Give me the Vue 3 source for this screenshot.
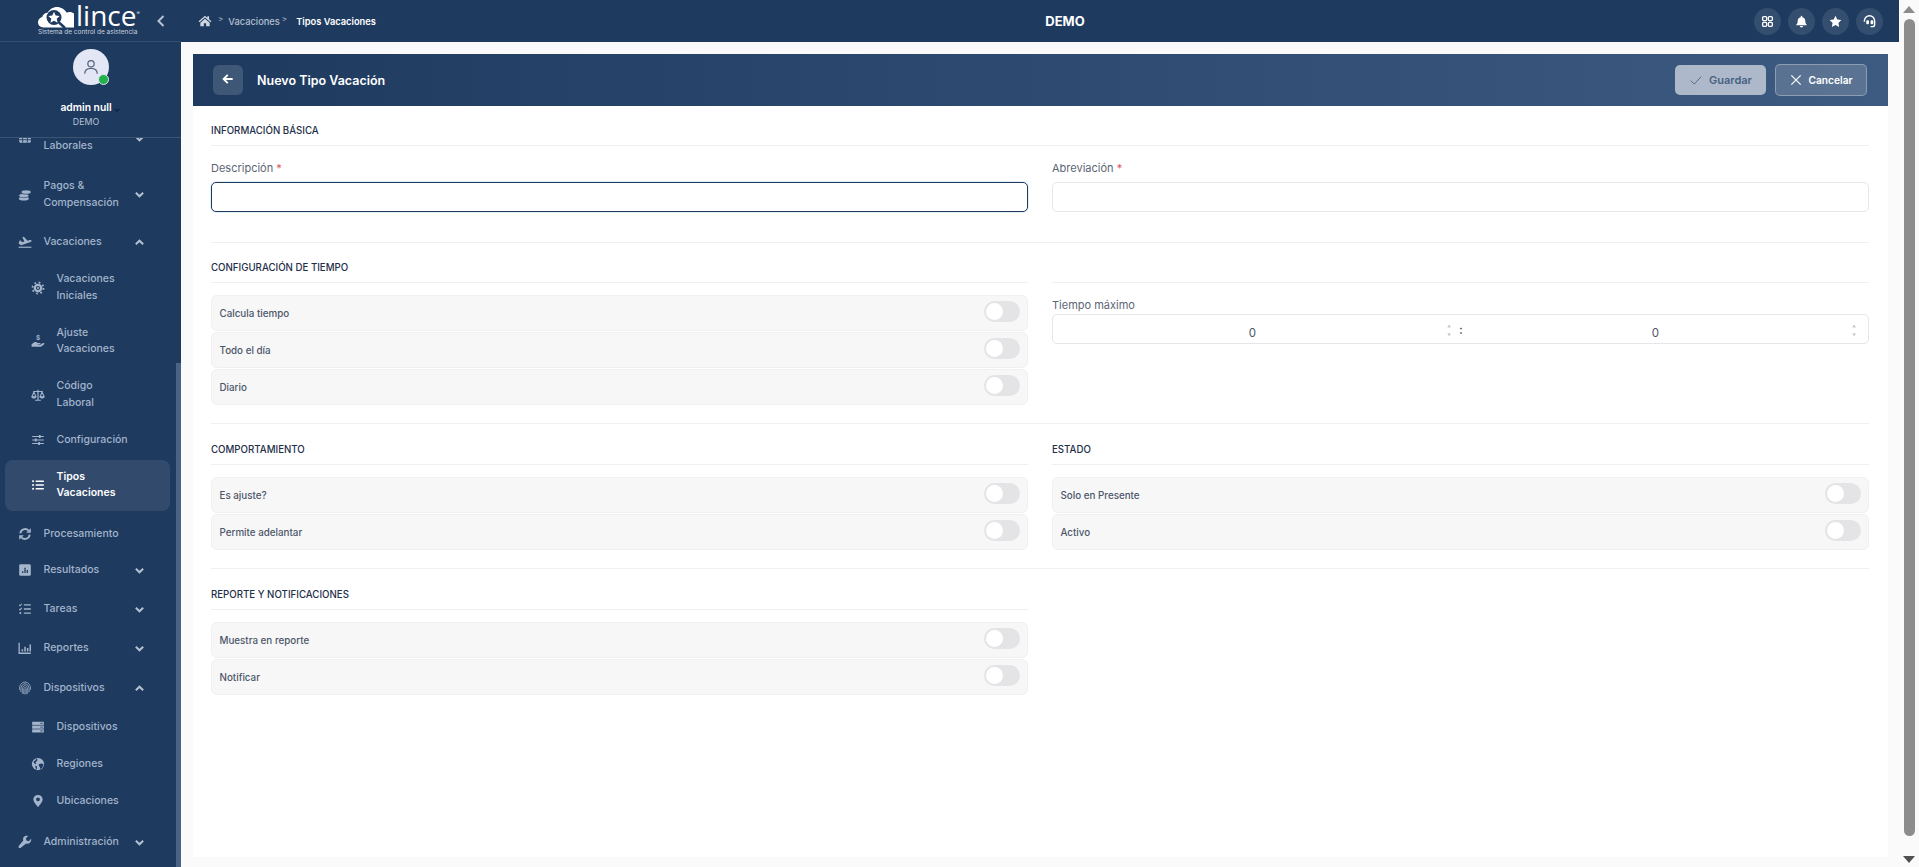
<template>
  <div class="page">
    <div class="app">
      <aside class="sidebar">
        <div class="logo-row">
          <div class="logo">
            <div class="logo-top">
              <svg class="logo-cloud" viewBox="0 0 36 21">
                <path d="M5.500 20.500C2.400 20.500 0 18.200 0 15.300c0-2.500 1.700-4.600 4.200-5.200C4.900 7.500 7 5.800 9.500 5.800 11.500 2.300 15 0 19 0c4 0 7.500 2.300 9.500 5.500 1-.4 2-.6 3-.6 2 0 3.500.6 4.500 1.700v13.900H5.500z" fill="#fff"/>
                <circle cx="16" cy="10.500" r="7.500" fill="#1e3a5f"/>
                <path d="M21 15.500 27 21" stroke="#1e3a5f" stroke-width="2.500"/>
                <polygon points="16,4.800 17.700,8.600 21.700,9 18.700,11.800 19.600,15.800 16,13.700 12.400,15.800 13.300,11.800 10.300,9 14.300,8.600" fill="#fff"/>
              </svg>
              <span class="logo-name">lince</span><span class="logo-reg">®</span>
            </div>
            <div class="logo-sub">Sistema de control de asistencia</div>
          </div>
          <svg class="collapse" viewBox="0 0 10 14"><polyline points="7.500,2 2.500,7 7.500,12" /></svg>
        </div>

        <div class="profile">
          <div class="avatar">
            <svg viewBox="0 0 24 24"><circle cx="12" cy="8" r="3.800"/><path d="M4.500 20c0-4 3-6.500 7.500-6.500s7.500 2.500 7.500 6.500"/></svg>
            <span class="online"></span>
          </div>
          <div class="user-name">admin null<svg class="user-caret" viewBox="0 0 10 6"><polyline points="2,1.500 5,4.500 8,1.500"/></svg></div>
          <div class="user-company">DEMO</div>
        </div>

        <nav class="nav">
          <div class="nav-list">
            <div
              v-for="item in menu"
              :key="item.id"
              class="nav-item"
              :class="[item.space, { sub: item.sub, active: item.active }]"
            >
              <svg class="nav-icon" viewBox="0 0 24 24" v-html="icons[item.icon]"></svg>
              <span class="nav-text">{{ item.label }}</span>
              <svg v-if="item.arrow" class="nav-arrow" viewBox="0 0 12 12">
                <polyline :points="item.arrow === 'up' ? '2,8 6,4 10,8' : '2,4 6,8 10,4'" />
              </svg>
            </div>
          </div>
        </nav>
        <div class="side-thumb"></div>
      </aside>

      <div class="main">
        <header class="topbar">
          <div class="crumbs">
            <svg class="crumb-home" viewBox="0 0 24 24" v-html="icons.home"></svg>
            <span class="crumb-sep">&gt;</span>
            <span class="crumb">Vacaciones</span>
            <span class="crumb-sep">&gt;</span>
            <span class="crumb current">Tipos Vacaciones</span>
          </div>
          <div class="company">DEMO</div>
          <div class="top-actions">
            <button v-for="b in topButtons" :key="b" class="round-btn">
              <svg viewBox="0 0 24 24" v-html="icons[b]"></svg>
            </button>
          </div>
        </header>

        <div class="content">
          <section class="card">
            <div class="card-head">
              <button class="back-btn">
                <svg viewBox="0 0 24 24"><path d="M20 12H5M11.500 5 4.500 12l7 7" /></svg>
              </button>
              <h1 class="card-title">Nuevo Tipo Vacación</h1>
              <div class="head-actions">
                <button class="btn-save">
                  <svg viewBox="0 0 24 24"><polyline points="3,13 9,19 21,6" /></svg>
                  Guardar
                </button>
                <button class="btn-cancel">
                  <svg viewBox="0 0 24 24"><path d="M4 4l16 16M20 4 4 20" /></svg>
                  Cancelar
                </button>
              </div>
            </div>

            <div class="card-body">
              <div class="block block-basic">
                <h2 class="sec-title">Información Básica</h2>
                <div class="cols">
                  <label class="field">
                    <span class="field-label">Descripción <i>*</i></span>
                    <input class="text-input focused" type="text" />
                  </label>
                  <label class="field">
                    <span class="field-label">Abreviación <i>*</i></span>
                    <input class="text-input" type="text" />
                  </label>
                </div>
              </div>

              <div class="block block-time">
                <div class="cols">
                  <div>
                    <h2 class="sec-title">Configuración de Tiempo</h2>
                    <div class="toggles">
                      <div v-for="t in timeToggles" :key="t" class="toggle-row">
                        <span>{{ t }}</span><span class="switch"></span>
                      </div>
                    </div>
                  </div>
                  <div>
                    <div class="sec-title blank"></div>
                    <div class="field time-field">
                      <span class="field-label">Tiempo máximo</span>
                      <div class="time-input">
                        <div class="time-part first"><span class="time-value">0</span><span class="spin"><b>˄</b><b>˅</b></span></div>
                        <span class="time-colon">:</span>
                        <div class="time-part"><span class="time-value">0</span><span class="spin"><b>˄</b><b>˅</b></span></div>
                      </div>
                    </div>
                  </div>
                </div>
              </div>

              <div class="block">
                <div class="cols">
                  <div>
                    <h2 class="sec-title">Comportamiento</h2>
                    <div class="toggles">
                      <div v-for="t in behaviorToggles" :key="t" class="toggle-row">
                        <span>{{ t }}</span><span class="switch"></span>
                      </div>
                    </div>
                  </div>
                  <div>
                    <h2 class="sec-title">Estado</h2>
                    <div class="toggles">
                      <div v-for="t in stateToggles" :key="t" class="toggle-row">
                        <span>{{ t }}</span><span class="switch"></span>
                      </div>
                    </div>
                  </div>
                </div>
              </div>

              <div class="block last">
                <div class="cols">
                  <div>
                    <h2 class="sec-title">Reporte y Notificaciones</h2>
                    <div class="toggles">
                      <div v-for="t in reportToggles" :key="t" class="toggle-row">
                        <span>{{ t }}</span><span class="switch"></span>
                      </div>
                    </div>
                  </div>
                </div>
              </div>
            </div>
          </section>
        </div>
      </div>
    </div>

    <div class="page-scroll">
      <span class="arrow-up"></span>
      <div class="page-thumb"></div>
      <span class="arrow-down"></span>
    </div>
  </div>
</template>

<script setup>
const menu = [
  { id: 1, label: 'Gestiones Laborales', icon: 'calendar', arrow: 'down', space: 'wide' },
  { id: 2, label: 'Pagos & Compensación', icon: 'coins', arrow: 'down' },
  { id: 3, label: 'Vacaciones', icon: 'plane', arrow: 'up', space: 'tight' },
  { id: 4, label: 'Vacaciones Iniciales', icon: 'gear', sub: true },
  { id: 5, label: 'Ajuste Vacaciones', icon: 'hand', sub: true },
  { id: 6, label: 'Código Laboral', icon: 'scale', sub: true },
  { id: 7, label: 'Configuración', icon: 'sliders', sub: true },
  { id: 8, label: 'Tipos Vacaciones', icon: 'list', sub: true, active: true },
  { id: 9, label: 'Procesamiento', icon: 'sync', space: 'tighter' },
  { id: 10, label: 'Resultados', icon: 'square', arrow: 'down' },
  { id: 11, label: 'Tareas', icon: 'tasks', arrow: 'down' },
  { id: 12, label: 'Reportes', icon: 'bars', arrow: 'down', space: 'wide' },
  { id: 13, label: 'Dispositivos', icon: 'finger', arrow: 'up' },
  { id: 14, label: 'Dispositivos', icon: 'server', sub: true },
  { id: 15, label: 'Regiones', icon: 'globe', sub: true },
  { id: 16, label: 'Ubicaciones', icon: 'pin', sub: true, space: 'end-group' },
  { id: 17, label: 'Administración', icon: 'wrench', arrow: 'down' },
]

const topButtons = ['apps', 'bell', 'star', 'headset']

const timeToggles = ['Calcula tiempo', 'Todo el día', 'Diario']
const behaviorToggles = ['Es ajuste?', 'Permite adelantar']
const stateToggles = ['Solo en Presente', 'Activo']
const reportToggles = ['Muestra en reporte', 'Notificar']

// cada icono son solo las formas internas del svg de 24x24
const icons = {
  home: '<path fill="currentColor" d="M12 3 1 12.500l1.500 1.700L12 6l9.500 8.200 1.500-1.700-4-3.500V4h-3v2.500z"/><path fill="currentColor" d="M12 8 4 14.800V21h6v-5h4v5h6v-6.200z"/>',
  calendar: '<rect x="2" y="5" width="20" height="15" rx="2" fill="currentColor"/><path stroke="#1e3a5f" stroke-width="1.500" d="M2 10h20M8 10v10M16 10v10M2 15h20"/>',
  coins: '<ellipse cx="10" cy="18" rx="8.500" ry="3.500" fill="currentColor"/><ellipse cx="10" cy="13" rx="8.500" ry="3.500" fill="currentColor" stroke="#1e3a5f"/><ellipse cx="14" cy="7" rx="8.500" ry="3.500" fill="currentColor" stroke="#1e3a5f"/><path stroke="#1e3a5f" stroke-width="1" d="M20 10.500v5"/>',
  plane: '<path fill="currentColor" d="M1 14.500 3 9l2 .8 2 2.700 4-1.300L7.500 4l2.500-.8 6.500 6.800 4-1.300c1.200-.3 2.500.2 2.800 1 .2.800-.5 1.700-1.800 2.200L5.500 17.500z"/><rect x="1" y="20" width="22" height="2" fill="currentColor"/>',
  gear: '<circle cx="12" cy="12" r="9.500" fill="none" stroke="currentColor" stroke-width="3" stroke-dasharray="3 4.460"/><circle cx="12" cy="12" r="7.500" fill="currentColor"/><circle cx="12" cy="12" r="3.500" fill="#1e3a5f"/><circle cx="12" cy="12" r="1.800" fill="currentColor"/>',
  hand: '<path fill="currentColor" d="M1 17.500 5 14.500c1.500-1 3.500-1 5 0l2 .8h3c1 0 1.500.6 1.500 1.200s-.6 1.200-1.500 1.200h-3.500v.8H16l4.500-3c.8-.5 1.800-.3 2.200.3.400.7.200 1.500-.5 2L17 22H1z"/><text x="12" y="11" font-size="11" font-weight="700" text-anchor="middle" fill="currentColor" font-family="Inter, sans-serif">$</text>',
  scale: '<path fill="none" stroke="currentColor" stroke-width="2" d="M12 3v17M4 6h16M7 21h10"/><path fill="none" stroke="currentColor" stroke-width="1.800" d="M5 7 1.500 15h7zM19 7l-3.500 8h7z"/><path fill="currentColor" d="M1 15h8c0 2-2 3-4 3s-4-1-4-3zM15 15h8c0 2-2 3-4 3s-4-1-4-3z"/>',
  sliders: '<path stroke="currentColor" stroke-width="2" d="M2 6h20M2 12h20M2 18h20"/><path stroke="currentColor" stroke-width="3" d="M15 3.500v5M8 9.500v5M14 15.500v5"/>',
  list: '<path stroke="currentColor" stroke-width="2.600" d="M8 5.500h14M8 12h14M8 18.500h14"/><rect x="2" y="4" width="3" height="3" fill="currentColor"/><rect x="2" y="10.500" width="3" height="3" fill="currentColor"/><rect x="2" y="17" width="3" height="3" fill="currentColor"/>',
  sync: '<path fill="none" stroke="currentColor" stroke-width="3.200" d="M4 11a8.200 8.200 0 0 1 14-5M20 13a8.200 8.200 0 0 1-14 5"/><path fill="currentColor" d="M22 2v8h-8zM2 22v-8h8z"/>',
  square: '<rect x="2" y="2" width="20" height="20" rx="2.500" fill="currentColor"/><path stroke="#1e3a5f" stroke-width="2.200" d="M8 17v-3M12 17V8M16 17v-5"/>',
  tasks: '<path stroke="currentColor" stroke-width="2.400" d="M10 5h12M10 12h12M10 19h12"/><path fill="none" stroke="currentColor" stroke-width="1.800" d="M2 5l1.500 1.500L6.500 3M2 12l1.500 1.500L6.500 10"/><circle cx="4" cy="19" r="1.800" fill="currentColor"/>',
  bars: '<path fill="none" stroke="currentColor" stroke-width="2.200" d="M2 3v18h20"/><path stroke="currentColor" stroke-width="2.600" d="M7.500 18v-4M12 18V10M16.500 18v-6M21 18V6"/>',
  finger: '<g fill="none" stroke="currentColor" stroke-width="1.400"><path d="M2.500 15C2 7.500 6 1.800 12 1.800S22 7.500 21.500 15"/><path d="M5 19C4 10.500 7 4.800 12 4.800S20 10.500 19 19"/><path d="M7.500 21.500C6.500 13 8.500 7.800 12 7.800S17.500 13 16.500 21.500"/><path d="M10 22.500C9 16 10 11 12 11s3 5 2 11.500"/><path d="M12 14v9"/></g>',
  server: '<rect x="2" y="3" width="20" height="5.400" fill="currentColor"/><rect x="2" y="9.500" width="20" height="5.400" fill="currentColor"/><rect x="2" y="16" width="20" height="5.400" fill="currentColor"/><path stroke="#1e3a5f" stroke-width="1.400" d="M16 5.700h4M16 12.200h4M16 18.700h4"/>',
  globe: '<circle cx="12" cy="12" r="10.500" fill="currentColor"/><path fill="#1e3a5f" d="M4 8c2-.5 4-2.500 5-5l2 1-.5 3-3 2 1.500 2-2 1.500zM14 12l5-1 2.500 2-2 5-3.500 3-1-4-2-3zM7 15l3 1 .5 4-2 .5z"/>',
  pin: '<path fill="currentColor" d="M12 1.500c-4.700 0-8 3.400-8 7.700 0 5.300 8 13.300 8 13.300s8-8 8-13.300c0-4.300-3.300-7.700-8-7.700zm0 11a3.300 3.300 0 1 1 0-6.600 3.300 3.300 0 0 1 0 6.600z"/>',
  wrench: '<path fill="currentColor" d="M22.500 6.500 18.500 10.500 14.500 9.500 13.500 5.500 17.500 1.500c-3-.8-6 0-7.500 2C8.500 5 8.300 7.500 9 9.500L1.500 18.500c-.8 1-.8 2.300 0 3.200s2.300 1 3.300.2L14 14.500c2 .7 4.500.5 6-1 2-1.500 3.200-4.500 2.500-7z"/>',
  apps: '<g fill="none" stroke="currentColor" stroke-width="2.400"><rect x="3" y="3" width="7.500" height="7.500" rx="2"/><rect x="13.500" y="3" width="7.500" height="7.500" rx="2"/><rect x="3" y="13.500" width="7.500" height="7.500" rx="2"/><rect x="13.500" y="13.500" width="7.500" height="7.500" rx="2"/></g>',
  bell: '<path fill="currentColor" d="M12 1.500c-.9 0-1.500.7-1.500 1.500v1C7 4.800 5 7.500 5 11c0 3.500-1 5-2.500 6.500V19h19v-1.500C20 16 19 14.500 19 11c0-3.500-2-6.200-5.500-7V3c0-.8-.6-1.500-1.500-1.500zM9 20.500c0 1.500 1.300 2.500 3 2.500s3-1 3-2.500z"/>',
  star: '<polygon fill="currentColor" points="12,1.500 15.300,8.300 22.800,9.400 17.400,14.700 18.700,22.200 12,18.600 5.300,22.200 6.600,14.700 1.200,9.400 8.700,8.300"/>',
  headset: '<path fill="none" stroke="currentColor" stroke-width="2.600" d="M2.500 12.500v-1.500a9.500 9.500 0 0 1 19 0v6.500c0 2.500-1.800 4-4 4h-3.500"/><rect x="6" y="9.500" width="5" height="7.500" rx="1.800" fill="currentColor"/><rect x="14" y="9.500" width="5" height="7.500" rx="1.800" fill="currentColor"/>',
}
</script>

<style>
html, body {
  margin: 0;
  height: 100%;
  overflow: hidden;
  background: #fafafa;
}
</style>

<style scoped>
.page {
  width: 1919px;
  height: 867px;
  display: flex;
  font-family: Inter, "Liberation Sans", sans-serif;
  overflow: hidden;
}

.app {
  flex: 1;
  min-width: 0;
  display: flex;
}

/* barra lateral */
.sidebar {
  position: relative;
  width: 181px;
  flex-shrink: 0;
  display: flex;
  flex-direction: column;
  background: #1e3a5f;
  color: #a3b4cb;
}

.logo-row {
  height: 41px;
  flex-shrink: 0;
  border-bottom: 1px solid rgba(255, 255, 255, 0.1);
  display: flex;
  align-items: flex-start;
  padding-left: 38px;
}

.logo {
  width: 103px;
  padding-top: 3px;
}

.logo-top {
  display: flex;
  align-items: flex-end;
  height: 25px;
}

.logo-cloud {
  width: 36px;
  height: 21px;
  flex-shrink: 0;
}

.logo-name {
  font-family: "Open Sans", sans-serif;
  font-size: 28px;
  font-weight: 500;
  line-height: 25px;
  color: #fff;
  margin-left: 2px;
}

.logo-reg {
  font-size: 5px;
  line-height: 6px;
  color: #dfe5ee;
  align-self: flex-start;
  margin: 7px 0 0 0;
}

.logo-sub {
  font-size: 6.500px;
  line-height: 8px;
  color: #c9d2df;
  white-space: nowrap;
}

.collapse {
  width: 10px;
  height: 14px;
  margin: 14px 0 0 15px;
  fill: none;
  stroke: #b9c4d3;
  stroke-width: 2;
}

.profile {
  height: 96px;
  flex-shrink: 0;
  box-sizing: border-box;
  border-bottom: 1px solid rgba(255, 255, 255, 0.14);
  padding-top: 7px;
  display: flex;
  flex-direction: column;
  align-items: center;
  position: relative;
  z-index: 1;
  background: #1e3a5f;
}

.avatar {
  position: relative;
  width: 36px;
  height: 36px;
  border-radius: 50%;
  background: #e3e6f5;
  display: flex;
  align-items: center;
  justify-content: center;
  margin-bottom: 15px;
}

.avatar svg {
  width: 20px;
  height: 20px;
  fill: none;
  stroke: #56657c;
  stroke-width: 1.500;
}

.online {
  position: absolute;
  right: 0;
  bottom: 0;
  width: 9px;
  height: 9px;
  border-radius: 50%;
  background: #22b14c;
  border: 1px solid #e3e6f5;
}

.user-name {
  position: relative;
  font-size: 10.300px;
  line-height: 14px;
  font-weight: 600;
  color: #fff;
  margin-right: 9px;
}

.user-caret {
  position: absolute;
  right: -9px;
  top: 7px;
  width: 8px;
  height: 6px;
  fill: none;
  stroke: #0f2240;
  stroke-width: 1.500;
}

.user-company {
  font-size: 8.800px;
  line-height: 15px;
  color: #b7c3d4;
  margin-right: 9px;
}

.nav {
  flex: 1;
  overflow: hidden;
}

.nav-list {
  margin-top: -26.500px;
  padding-right: 11px;
}

.nav-item {
  display: flex;
  align-items: center;
  padding: 10.250px 0 10.250px 18px;
  font-size: 10.500px;
  line-height: 16.500px;
  font-weight: 500;
  margin-bottom: 2px;
}

.nav-item.wide {
  margin-bottom: 3px;
}

.nav-item.tight {
  margin-bottom: 0.500px;
}

.nav-item.tighter {
  margin-bottom: -1px;
}

.nav-item.sub {
  padding-left: 31px;
  margin-bottom: 0;
}

.nav-item.end-group {
  margin-bottom: 4px;
}

.nav-item.active {
  margin: 1px 0 5px 5px;
  padding-top: 9px;
  padding-bottom: 9px;
  padding-left: 26px;
  border-radius: 8px;
  background: rgba(255, 255, 255, 0.09);
  color: #fff;
  font-weight: 600;
}

.nav-icon {
  width: 14px;
  height: 14px;
  flex-shrink: 0;
  margin-right: 11.500px;
}

.nav-text {
  width: 74px;
}

.nav-arrow {
  width: 11px;
  height: 11px;
  margin-left: 16.500px;
  fill: none;
  stroke: #b3c0d1;
  stroke-width: 2.200;
}

.side-thumb {
  position: absolute;
  right: 0;
  top: 363px;
  bottom: 0;
  width: 5px;
  background: #4a6285;
}

/* zona principal */
.main {
  flex: 1;
  min-width: 0;
  display: flex;
  flex-direction: column;
  background: #fafafa;
}

.topbar {
  height: 42px;
  flex-shrink: 0;
  background: #1e3a5f;
  display: grid;
  grid-template-columns: 1fr auto 1fr;
  align-items: center;
  padding: 0 17px;
}

.crumbs {
  display: flex;
  align-items: center;
  font-size: 9.300px;
  font-weight: 500;
  color: #b4c0d1;
}

.crumb-home {
  width: 14px;
  height: 14px;
  color: #cfd7e2;
  margin-right: 4px;
}

.crumb-sep {
  font-size: 8px;
  margin: -4px 5px 0 2px;
  color: #93a3ba;
}

.crumb.current {
  color: #fff;
  font-weight: 600;
  margin-left: 4px;
}

.company {
  font-size: 13px;
  font-weight: 700;
  color: #fff;
  padding-left: 50px;
  margin-top: -1px;
}

.top-actions {
  display: flex;
  justify-content: flex-end;
  gap: 7px;
  margin-right: -1px;
}

.round-btn {
  width: 27px;
  height: 27px;
  padding: 0;
  border: none;
  border-radius: 50%;
  background: rgba(255, 255, 255, 0.1);
  color: #fff;
  display: flex;
  align-items: center;
  justify-content: center;
}

.round-btn svg {
  width: 13px;
  height: 13px;
}

.content {
  flex: 1;
  min-height: 0;
  padding: 12px 11px 10px 12px;
  display: flex;
}

.card {
  flex: 1;
  min-width: 0;
  background: #fff;
  display: flex;
  flex-direction: column;
}

.card-head {
  height: 52px;
  flex-shrink: 0;
  display: flex;
  align-items: center;
  padding: 0 21px 0 20px;
  background: linear-gradient(90deg, #1e3a5f 0%, #3d5a80 100%);
}

.back-btn {
  width: 30px;
  height: 30px;
  padding: 0;
  border: none;
  border-radius: 6px;
  background: rgba(255, 255, 255, 0.15);
  display: flex;
  align-items: center;
  justify-content: center;
}

.back-btn svg {
  width: 14px;
  height: 14px;
  fill: none;
  stroke: #fff;
  stroke-width: 3.200;
  margin-top: -2px;
}

.card-title {
  margin: 0 0 0 14px;
  font-size: 12.500px;
  font-weight: 600;
  color: #fff;
}

.head-actions {
  margin-left: auto;
  display: flex;
  align-items: center;
  gap: 9px;
}

.btn-save,
.btn-cancel {
  display: flex;
  align-items: center;
  justify-content: center;
  gap: 6px;
  box-sizing: border-box;
  font-family: inherit;
  font-size: 11px;
  font-weight: 600;
  border-radius: 5px;
  padding: 0;
}

.btn-save {
  width: 91px;
  height: 30px;
  border: none;
  background: #adb9ca;
  color: #486182;
}

.btn-save svg,
.btn-cancel svg {
  width: 14px;
  height: 14px;
  fill: none;
  stroke-width: 1.500;
}

.btn-save svg {
  stroke: #486182;
}

.btn-cancel {
  width: 92px;
  height: 32px;
  border: 1px solid rgba(255, 255, 255, 0.3);
  background: rgba(255, 255, 255, 0.16);
  color: #fff;
  font-size: 10.200px;
  gap: 5px;
}

.btn-cancel svg {
  stroke: #fff;
  stroke-width: 2;
}

.card-body {
  padding: 0 19px 0 18px;
}

.block {
  padding: 18px 0;
  border-bottom: 1px solid #eeeff1;
}

.block.block-basic {
  padding-top: 17px;
  padding-bottom: 30px;
}

.block.block-time {
  padding-top: 17px;
}

.block.last {
  border-bottom: none;
}

.cols {
  display: grid;
  grid-template-columns: 1fr 1fr;
  column-gap: 24px;
}

.sec-title {
  margin: 0;
  height: 22px;
  font-size: 9.700px;
  line-height: 16px;
  font-weight: 500;
  text-transform: uppercase;
  color: #1e2f4a;
  border-bottom: 1px solid #eeeff1;
}

.block-basic .field {
  margin-top: 15px;
}

.field {
  display: flex;
  flex-direction: column;
}

.field-label {
  font-size: 11px;
  line-height: 14px;
  font-weight: 400;
  color: #5c6676;
  margin-bottom: 7px;
}

.field-label i {
  color: #e05260;
  font-style: normal;
}

.text-input {
  box-sizing: border-box;
  height: 30px;
  border: 1px solid #e4e6ea;
  border-radius: 5px;
  outline: none;
  background: #fff;
}

.text-input.focused {
  border: 1.500px solid #1e3a5f;
  box-shadow: 0 0 0 1px #e5edf7;
}

.toggles {
  margin-top: 12px;
  display: flex;
  flex-direction: column;
  gap: 1px;
}

.toggle-row {
  height: 36px;
  box-sizing: border-box;
  display: flex;
  align-items: center;
  justify-content: space-between;
  padding: 0 8px 0 7.500px;
  background: #f7f7f8;
  border: 1px solid #f0f0f1;
  border-radius: 6px;
  font-size: 9.800px;
  font-weight: 500;
  color: #4c5668;
}

.switch {
  position: relative;
  width: 36px;
  height: 21px;
  border-radius: 11px;
  background: #e4e4e6;
  margin-top: -3px;
  margin-right: -1px;
}

.switch::after {
  content: "";
  position: absolute;
  left: 2px;
  top: 2px;
  width: 17px;
  height: 17px;
  border-radius: 50%;
  background: #fff;
}

.time-field {
  margin-top: 15px;
}

.time-field .field-label {
  margin-bottom: 2px;
}

.time-input {
  box-sizing: border-box;
  height: 30px;
  border: 1px solid #e4e6ea;
  border-radius: 5px;
  display: flex;
  align-items: center;
}

.time-part {
  flex: 1;
  display: flex;
  align-items: center;
  height: 100%;
}

.time-value {
  flex: 1;
  text-align: center;
  font-size: 11.500px;
  color: #4c5668;
  padding-top: 7px;
}

.time-part.first .time-value {
  padding-left: 10px;
}

.spin {
  display: flex;
  flex-direction: column;
  width: 14px;
  margin: 4px 7px 0 0;
  color: #a4abb7;
}

.time-part.first .spin {
  margin-right: 1px;
}

.spin b {
  font-size: 8px;
  line-height: 8px;
  font-weight: 400;
  text-align: center;
}

.time-colon {
  width: 6px;
  margin-left: 1px;
  text-align: center;
  font-size: 12px;
  font-weight: 600;
  color: #4c5668;
}

/* barra de desplazamiento de la pagina */
.page-scroll {
  width: 20px;
  flex-shrink: 0;
  background: #fafafa;
  display: flex;
  flex-direction: column;
  align-items: center;
  padding: 6px 0 4px;
  box-sizing: border-box;
}

.page-thumb {
  flex: 1;
  width: 11px;
  margin: 6px 0 20px;
  border-radius: 6px;
  background: #8c8c8c;
}

.arrow-up {
  width: 0;
  height: 0;
  border-left: 6px solid transparent;
  border-right: 6px solid transparent;
  border-bottom: 7px solid #8c8c8c;
}

.arrow-down {
  width: 0;
  height: 0;
  border-left: 6px solid transparent;
  border-right: 6px solid transparent;
  border-top: 7px solid #505050;
}
</style>
